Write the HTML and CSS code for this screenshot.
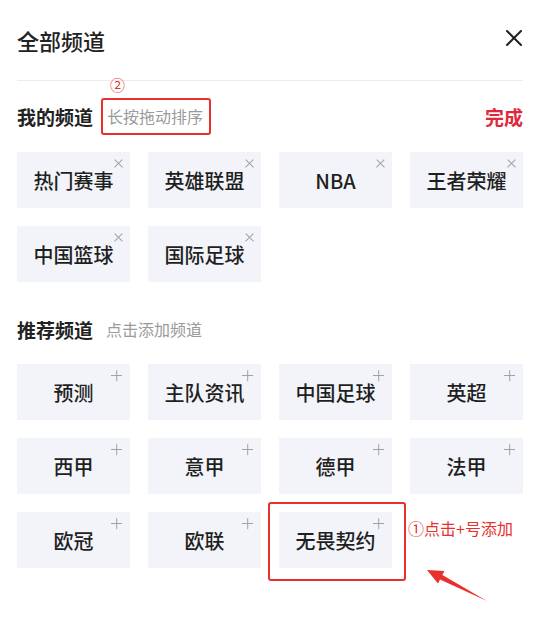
FILE: index.html
```html
<!DOCTYPE html>
<html lang="zh-CN">
<head>
  <meta charset="UTF-8" />
  <meta name="viewport" content="width=device-width, initial-scale=1.0"/>
  <title>全部频道</title>
  <link rel="stylesheet" href="styles.css">
</head>
<body>
  <div class="panel">
    <header class="panel-head">
      <h1>全部频道</h1>
      <svg class="close" width="16" height="16" viewBox="0 0 16 16">
        <path d="M1 1L15 15M15 1L1 15" stroke="#222" stroke-width="2" stroke-linecap="round"/>
      </svg>
    </header>

    <section class="mine">
      <div class="section-head">
        <h2>我的频道</h2>
        <span class="hint boxed">长按拖动排序<span class="mark-num">②</span></span>
        <a class="done">完成</a>
      </div>
      <div class="tiles">
        <div class="tile">热门赛事<i class="del"></i></div>
        <div class="tile">英雄联盟<i class="del"></i></div>
        <div class="tile">NBA<i class="del"></i></div>
        <div class="tile">王者荣耀<i class="del"></i></div>
        <div class="tile">中国篮球<i class="del"></i></div>
        <div class="tile">国际足球<i class="del"></i></div>
      </div>
    </section>

    <section class="recommend">
      <div class="section-head">
        <h2>推荐频道</h2>
        <span class="hint">点击添加频道</span>
      </div>
      <div class="tiles">
        <div class="tile">预测<i class="add"></i></div>
        <div class="tile">主队资讯<i class="add"></i></div>
        <div class="tile">中国足球<i class="add"></i></div>
        <div class="tile">英超<i class="add"></i></div>
        <div class="tile">西甲<i class="add"></i></div>
        <div class="tile">意甲<i class="add"></i></div>
        <div class="tile">德甲<i class="add"></i></div>
        <div class="tile">法甲<i class="add"></i></div>
        <div class="tile">欧冠<i class="add"></i></div>
        <div class="tile">欧联<i class="add"></i></div>
        <div class="tile">无畏契约<i class="add"></i>
          <span class="callout-box"></span>
          <span class="callout-text">①点击+号添加</span>
          <svg class="callout-arrow" width="80" height="50" viewBox="0 0 80 50">
            <polygon points="8,8 25.4,9.1 23.4,13.1 68,39 21,17.5 19,21.5" fill="#e8302c"/>
          </svg>
        </div>
      </div>
    </section>
  </div>
</body>
</html>
```

FILE: styles.css
```css
body {
  margin: 0;
  background: #fff;
  font-family: "Noto Sans CJK SC", "Noto Sans", sans-serif;
  color: #222;
}
.panel {
  padding: 0 19px 66px 17px;
}
.panel-head {
  height: 80px;
  display: flex;
  align-items: center;
  justify-content: space-between;
  border-bottom: 1px solid #ececec;
}
.panel-head h1 {
  margin: 0;
  font-size: 22px;
  font-weight: 500;
  color: #222;
}
.close {
  margin-right: 1px;
  margin-top: -4px;
}
.section-head {
  display: flex;
  align-items: center;
  height: 37px;
}
.section-head h2 {
  margin: 0;
  font-size: 19px;
  font-weight: 700;
  color: #222;
}
.hint {
  font-size: 16px;
  color: #9a9a9a;
  margin-left: 13px;
}
.boxed {
  position: relative;
  margin-left: 8px;
  height: 33px;
  line-height: 33px;
  padding: 0 6px 0 4px;
  border: 2px solid #e8302c;
  border-radius: 3px;
}
.mark-num {
  position: absolute;
  left: 7px;
  top: -24px;
  line-height: 18px;
  font-size: 15px;
  color: #e8302c;
}
.done {
  margin-left: auto;
  font-size: 19px;
  font-weight: 700;
  color: #e0283c;
}
.mine {
  padding-top: 17px;
}
.tiles {
  display: grid;
  grid-template-columns: repeat(4, 113px);
  gap: 18px;
  margin-top: 17px;
}
.tile {
  position: relative;
  height: 56px;
  display: flex;
  align-items: center;
  justify-content: center;
  background: #f2f4f9;
  font-size: 20px;
  font-weight: 500;
  color: #1f1f1f;
}
.del, .add {
  position: absolute;
  top: 6px;
  right: 6px;
  width: 11px;
  height: 11px;
}
.del::before, .del::after,
.add::before, .add::after {
  content: "";
  position: absolute;
  left: 0;
  top: 5px;
  width: 11px;
  height: 1.4px;
  background: #a2a2a2;
}
.del::before { transform: rotate(45deg); }
.del::after { transform: rotate(-45deg); }
.add { right: 8px; }
.add::after { transform: rotate(90deg); }
.recommend {
  padding-top: 33px;
}
.recommend .section-head {
  height: 28px;
}
.recommend .tiles {
  margin-top: 21px;
}
.callout-box {
  position: absolute;
  top: -10px;
  left: -11px;
  right: -14px;
  bottom: -13px;
  border: 2px solid #e8302c;
  border-radius: 3px;
}
.callout-text {
  position: absolute;
  left: 129px;
  top: 4px;
  white-space: nowrap;
  font-size: 16px;
  font-weight: 400;
  color: #e8302c;
}
.callout-arrow {
  position: absolute;
  left: 140px;
  top: 50px;
}
```
